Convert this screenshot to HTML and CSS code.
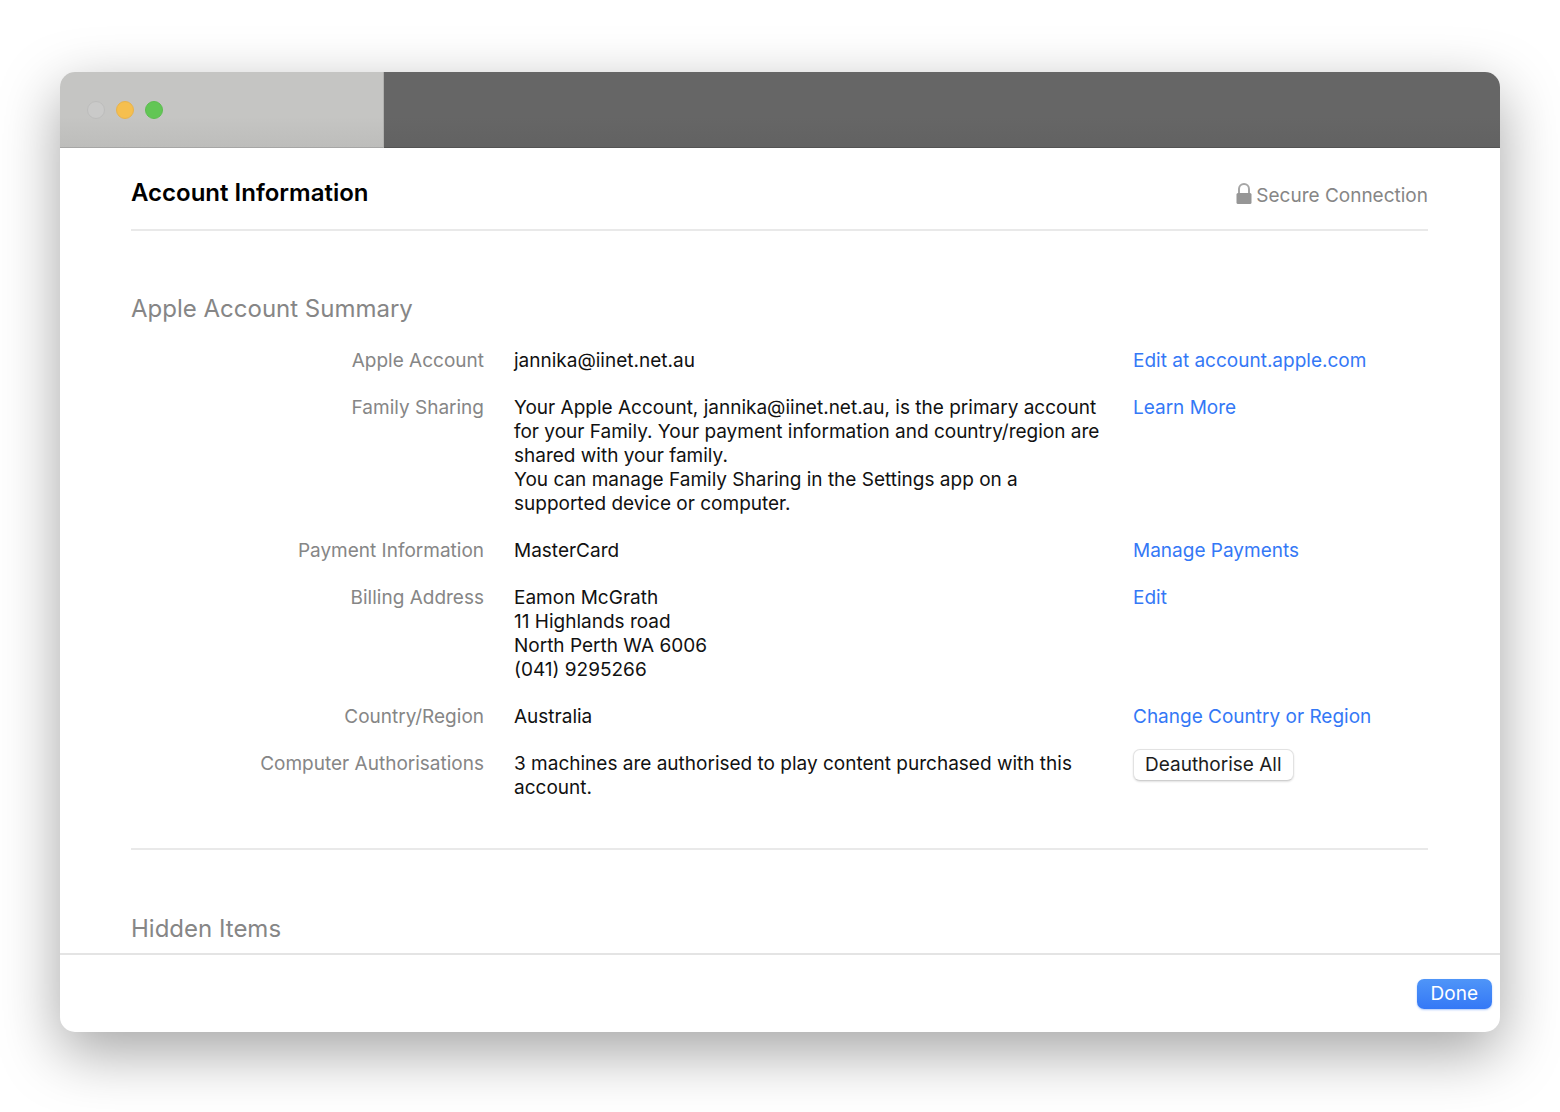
FILE: index.html
```html
<!DOCTYPE html>
<html lang="en-AU">
<head>
<meta charset="utf-8">
<meta name="viewport" content="width=device-width, initial-scale=1">
<title>Account Information</title>
<link rel="stylesheet" href="styles.css">
</head>
<body>
<main class="window">
  <div class="titlebar">
    <div class="titlebar-side">
      <button class="light light-close" type="button" aria-label="Close" disabled></button>
      <button class="light light-minimise" type="button" aria-label="Minimise"></button>
      <button class="light light-zoom" type="button" aria-label="Zoom"></button>
    </div>
    <div class="titlebar-main"></div>
  </div>

  <div class="content">
    <header class="page-header">
      <h1 class="page-title">Account Information</h1>
      <p class="secure">
        <svg class="lock" viewBox="0 0 16 22" aria-hidden="true">
          <path d="M3 11V6a5 5 0 0 1 10 0V11" fill="none" stroke="#a6a6a6" stroke-width="2"/>
          <rect x="0.5" y="10" width="15" height="11" rx="1.5" fill="#969696"/>
        </svg>
        <span>Secure Connection</span>
      </p>
    </header>

    <section class="summary">
      <h2 class="section-title">Apple Account Summary</h2>
      <dl class="rows">
        <div class="row">
          <dt>Apple Account</dt>
          <dd>jannika@iinet.net.au</dd>
          <dd><a href="#account">Edit at account.apple.com</a></dd>
        </div>
        <div class="row">
          <dt>Family Sharing</dt>
          <dd>Your Apple Account, jannika@iinet.net.au, is the primary account for your Family. Your payment information and country/region are shared with your family.<br>You can manage Family Sharing in the Settings app on a supported device or computer.</dd>
          <dd><a href="#family">Learn More</a></dd>
        </div>
        <div class="row">
          <dt>Payment Information</dt>
          <dd>MasterCard</dd>
          <dd><a href="#payments">Manage Payments</a></dd>
        </div>
        <div class="row">
          <dt>Billing Address</dt>
          <dd>Eamon McGrath<br>11 Highlands road<br>North Perth WA 6006<br>(041) 9295266</dd>
          <dd><a href="#billing">Edit</a></dd>
        </div>
        <div class="row">
          <dt>Country/Region</dt>
          <dd>Australia</dd>
          <dd><a href="#region">Change Country or Region</a></dd>
        </div>
        <div class="row">
          <dt>Computer Authorisations</dt>
          <dd>3 machines are authorised to play content purchased with this account.</dd>
          <dd class="action"><button class="button" type="button">Deauthorise All</button></dd>
        </div>
      </dl>
    </section>

    <section class="hidden-items">
      <h2 class="section-title">Hidden Items</h2>
    </section>
  </div>

  <footer class="footer">
    <button class="button button-primary" type="button">Done</button>
  </footer>
</main>
</body>
</html>
```
FILE: styles.css
```css
* {
  box-sizing: border-box;
}

body {
  margin: 0;
  min-height: 100vh;
  padding: 72px 60px 80px;
  display: flex;
  background: #fff;
  color: #111;
  font-family: Inter, "Liberation Sans", sans-serif;
  font-size: 19px;
  line-height: 24px;
}

h1,
h2,
p,
dl,
dd {
  margin: 0;
}

a {
  color: #3478f6;
  text-decoration: none;
}

.window {
  flex: 1;
  min-width: 0;
  display: flex;
  flex-direction: column;
  overflow: hidden;
  border-radius: 15px;
  background: #fff;
  box-shadow: 0 20px 60px rgba(0, 0, 0, 0.36);
}

.titlebar {
  display: flex;
  height: 76px;
}

.titlebar-side {
  flex: 0 0 324px;
  display: flex;
  align-items: center;
  gap: 11px;
  padding-left: 27px;
  border-right: 1px solid #b0b0ae;
  border-bottom: 1px solid #a6a6a5;
  background: linear-gradient(#c5c5c3 60%, #bdbdbb);
}

.titlebar-main {
  flex: 1;
  border-bottom: 1px solid #535353;
  background: linear-gradient(#666 60%, #626262);
}

.light {
  width: 18px;
  height: 18px;
  padding: 0;
  border: 1px solid;
  border-radius: 50%;
}

.light-close {
  background: #cacac9;
  border-color: #bdbdbc;
}

.light-minimise {
  background: #f5bf4f;
  border-color: #e8b34c;
}

.light-zoom {
  background: #62c655;
  border-color: #5cbd50;
}

.content {
  flex: 1;
  padding: 0 72px 0 71px;
}

.page-header {
  display: flex;
  justify-content: space-between;
  align-items: flex-end;
  height: 83px;
  padding-bottom: 20px;
  border-bottom: 2px solid #e9e9e9;
}

.page-title {
  font-size: 24px;
  font-weight: 600;
  line-height: 32px;
  color: #000;
}

.secure {
  display: flex;
  align-items: center;
  gap: 4px;
  color: #868686;
}

.lock {
  width: 16px;
  height: 22px;
  margin-bottom: 4px;
}

.section-title {
  font-size: 24px;
  font-weight: 400;
  line-height: 32px;
  color: #868686;
}

.summary {
  padding: 62px 0 48px;
  border-bottom: 2px solid #e9e9e9;
}

.rows {
  display: grid;
  gap: 23px;
  padding-top: 24px;
}

.row {
  display: grid;
  grid-template-columns: 353fr 589fr 295fr;
  column-gap: 30px;
}

.row dt {
  text-align: right;
  color: #868686;
}

.row .action {
  display: flex;
  align-items: flex-start;
  margin-top: -3px;
}

.hidden-items {
  padding: 63px 0 8px;
}

.button {
  height: 32px;
  padding: 0 11px;
  border: 1px solid #e2e2e2;
  border-bottom-color: #cfcfcf;
  border-radius: 7px;
  background: #fff;
  box-shadow: 0 1px 2px rgba(0, 0, 0, 0.12);
  color: #1c1c1c;
  font: inherit;
}

.footer {
  display: flex;
  justify-content: flex-end;
  align-items: center;
  height: 79px;
  padding-right: 8px;
  border-top: 2px solid #e4e4e4;
}

.button-primary {
  height: 30px;
  padding: 0 14px;
  border: 0;
  background: linear-gradient(#4f95f8, #3478f6);
  box-shadow: 0 1px 2px rgba(52, 120, 246, 0.4);
  color: #fff;
}
```
